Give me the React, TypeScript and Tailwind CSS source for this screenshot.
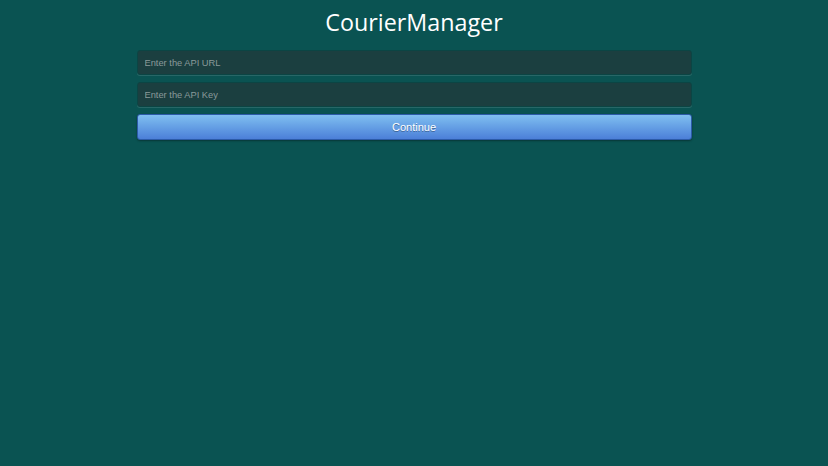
export default function App() {
  return (
    <div className="min-h-[466px] w-full bg-[#0a5352] font-['Liberation_Sans',Arial,sans-serif]">
      <div className="mx-auto w-[555px] pt-[7px]">
        <h1 className="text-center font-['Open_Sans',sans-serif] text-[23.3px] leading-[30px] text-white">
          CourierManager
        </h1>
        <div className="mt-[13px] flex flex-col gap-[7px]">
          <input
            placeholder="Enter the API URL"
            className="h-[25px] w-full rounded-[3px] border border-[#0b4544] bg-[#1b3f40] px-[7px] text-[9.3px] text-white shadow-[0_1px_0_rgba(255,255,255,0.12)] outline-none placeholder:text-[#8a9a9a]"
          />
          <input
            placeholder="Enter the API Key"
            className="h-[25px] w-full rounded-[3px] border border-[#0b4544] bg-[#1b3f40] px-[7px] text-[9.3px] text-white shadow-[0_1px_0_rgba(255,255,255,0.12)] outline-none placeholder:text-[#8a9a9a]"
          />
          <button className="h-[26px] w-full rounded-[3px] border border-[#2c5aa8] bg-gradient-to-b from-[#80bff0] to-[#4c7fd8] text-[11px] text-white [text-shadow:0_1px_0_rgba(0,0,0,0.35)] shadow-[0_1px_2px_rgba(0,0,0,0.35)]">
            Continue
          </button>
        </div>
      </div>
    </div>
  );
}
